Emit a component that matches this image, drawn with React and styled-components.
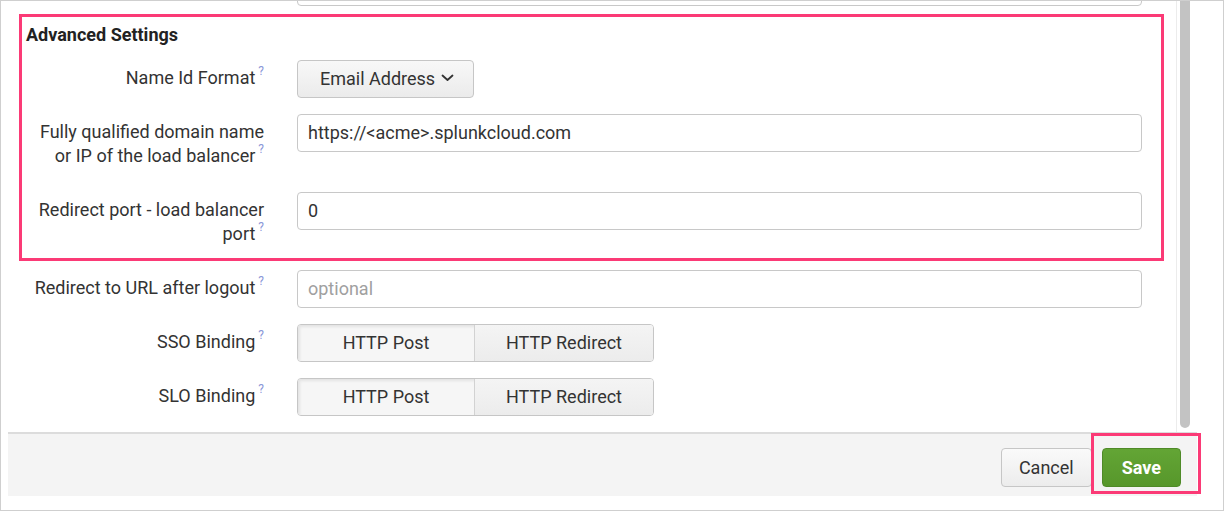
import React from 'react';
import styled, { createGlobalStyle } from 'styled-components';

const GlobalStyle = createGlobalStyle`
  html, body {
    margin: 0;
    padding: 0;
    background: #fff;
  }
  body {
    font-family: Roboto, "Liberation Sans", Arial, sans-serif;
    color: #333;
  }
  * {
    box-sizing: border-box;
  }
`;

const Frame = styled.div`
  width: 1224px;
  height: 511px;
  border: 1px solid #cfcfcf;
  padding: 0 25px 0 7px;
  background: #fff;
`;

const Modal = styled.div`
  width: 1189px;
  display: flex;
  flex-direction: column;
`;

const Body = styled.div`
  height: 431px;
  display: flex;
`;

const Content = styled.div`
  flex: 1;
  overflow: hidden;
`;

// scroll offset: the first row is mostly scrolled out of view
const Form = styled.div`
  margin-top: -33px;
  display: flex;
  flex-direction: column;
  gap: 16px;
`;

const ScrollTrack = styled.div`
  width: 21px;
  border-left: 1px solid #ececec;
  padding-left: 3px;
`;

const ScrollThumb = styled.div`
  width: 10px;
  height: 427px;
  background: #c3c3c3;
  border-radius: 0 0 5px 5px;
`;

const Section = styled.section`
  position: relative;
  display: flex;
  flex-direction: column;
  gap: 16px;

  &::after {
    content: '';
    position: absolute;
    inset: -8px 12px -7px 11px;
    border: 3px solid #fb3a76;
    pointer-events: none;
  }
`;

const Heading = styled.h3`
  margin: 0;
  padding: 3px 0 0 18px;
  font-size: 18px;
  line-height: 19px;
  font-weight: 700;
  color: #222;
`;

const Row = styled.div`
  display: grid;
  grid-template-columns: 257px 1fr;
  column-gap: 32px;
  padding-right: 34px;
  align-items: start;
`;

const Label = styled.label`
  text-align: right;
  font-size: 18px;
  line-height: 24px;
  padding: 6px 1px 8px 0;
  color: #333;
`;

const Help = styled.sup`
  font-size: 12px;
  line-height: 0;
  color: #8a97d8;
  margin-left: 3px;
  position: relative;
  top: -2px;
  vertical-align: super;
`;

const Input = styled.input`
  width: 100%;
  height: 38px;
  border: 1px solid #c8c8c8;
  border-radius: 4px;
  padding: 0 10px 2px;
  font-family: inherit;
  font-size: 18px;
  color: #333;
  background: #fff;
  outline: none;

  &::placeholder {
    color: #a0a0a0;
  }
`;

const Dropdown = styled.button`
  justify-self: start;
  width: 177px;
  height: 38px;
  display: flex;
  align-items: center;
  gap: 6px;
  padding: 0 0 2px 22px;
  border: 1px solid #c6c6c6;
  border-radius: 4px;
  background: linear-gradient(#f8f8f8, #ebebeb);
  font-family: inherit;
  font-size: 18px;
  color: #333;
`;

const Segmented = styled.div`
  justify-self: start;
  display: inline-flex;
  height: 38px;
  border: 1px solid #c6c6c6;
  border-radius: 4px;
  overflow: hidden;
`;

const Segment = styled.button`
  width: ${p => p.$w}px;
  height: 100%;
  border: none;
  border-left: ${p => (p.$first ? 'none' : '1px solid #d2d2d2')};
  background: ${p => (p.$active ? '#f6f6f6' : 'linear-gradient(#f4f4f4, #ececec)')};
  box-shadow: ${p => (p.$active ? 'inset 2px 2px 3px rgba(0,0,0,0.08)' : 'none')};
  font-family: inherit;
  font-size: 18px;
  color: #333;
  padding: 0 0 2px;
`;

const Footer = styled.div`
  height: 64px;
  border-top: 2px solid #dcdcdc;
  background: #f4f4f4;
  display: flex;
  justify-content: flex-end;
  align-items: flex-start;
  gap: 10px;
  padding: 14px 16px 0;
`;

const Button = styled.button`
  position: relative;
  height: 39px;
  border-radius: 4px;
  font-family: inherit;
  font-size: 18px;
  padding: 0 ${p => (p.$primary ? 19 : 17)}px;
  border: 1px solid ${p => (p.$primary ? '#4f8a28' : '#c6c6c6')};
  background: ${p => (p.$primary ? 'linear-gradient(#63a535, #57972b)' : 'linear-gradient(#fafafa, #ececec)')};
  color: ${p => (p.$primary ? '#fff' : '#333')};
  font-weight: ${p => (p.$primary ? 700 : 400)};

  ${p => p.$highlight && `
    &::after {
      content: '';
      position: absolute;
      inset: -16px -21px -8px -12px;
      border: 3px solid #fb3a76;
      pointer-events: none;
    }
  `}
`;

const Chevron = () => (
  <svg width="13" height="8" viewBox="0 0 13 8" fill="none">
    <polyline points="1.5,1.5 6.5,6 11.5,1.5" stroke="#333" strokeWidth="1.8" strokeLinecap="round" strokeLinejoin="round" />
  </svg>
);

const FieldLabel = ({ children }) => (
  <Label>
    {children}
    <Help>?</Help>
  </Label>
);

const Binding = ({ label }) => (
  <Row>
    <FieldLabel>{label}</FieldLabel>
    <Segmented>
      <Segment $first $active $w={176}>HTTP Post</Segment>
      <Segment $w={179}>HTTP Redirect</Segment>
    </Segmented>
  </Row>
);

export default function App() {
  return (
    <>
      <GlobalStyle />
      <Frame>
        <Modal>
          <Body>
            <Content>
              <Form>
                <Row>
                  <div />
                  <Input readOnly />
                </Row>

                <Section>
                  <Heading>Advanced Settings</Heading>
                  <Row>
                    <FieldLabel>Name Id Format</FieldLabel>
                    <Dropdown>
                      Email Address
                      <Chevron />
                    </Dropdown>
                  </Row>
                  <Row>
                    <FieldLabel>
                      Fully qualified domain name
                      <br />
                      or IP of the load balancer
                    </FieldLabel>
                    <Input readOnly value="https://<acme>.splunkcloud.com" />
                  </Row>
                  <Row>
                    <FieldLabel>
                      Redirect port - load balancer
                      <br />
                      port
                    </FieldLabel>
                    <Input readOnly value="0" />
                  </Row>
                </Section>

                <Row>
                  <FieldLabel>Redirect to URL after logout</FieldLabel>
                  <Input readOnly placeholder="optional" />
                </Row>
                <Binding label="SSO Binding" />
                <Binding label="SLO Binding" />
              </Form>
            </Content>
            <ScrollTrack>
              <ScrollThumb />
            </ScrollTrack>
          </Body>
          <Footer>
            <Button>Cancel</Button>
            <Button $primary $highlight>Save</Button>
          </Footer>
        </Modal>
      </Frame>
    </>
  );
}
